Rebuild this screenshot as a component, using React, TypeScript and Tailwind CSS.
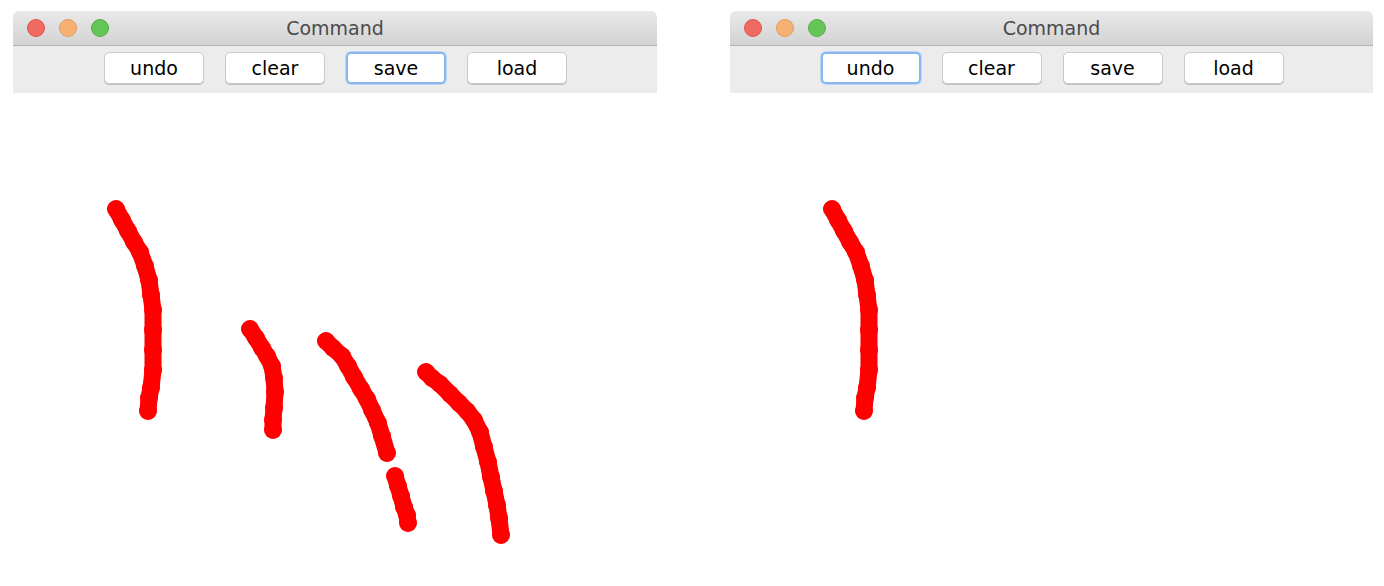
import React from "react";

type Pt = [number, number];

// strokes in page coordinates of the left window
const leftStrokes: Pt[][] = [
  [[116, 209], [122, 220], [128, 231], [134, 242], [140, 252], [145, 266], [149, 280], [151, 295], [153, 310], [153, 330], [153, 350], [153, 370], [151, 388], [149, 398], [148, 411]],
  [[250, 329], [256, 338], [262, 348], [267, 356], [272, 366], [274, 378], [275, 392], [274, 408], [273, 420], [273, 430]],
  [[326, 341], [333, 348], [342, 356], [348, 366], [354, 377], [361, 389], [367, 399], [372, 410], [378, 423], [382, 436], [387, 453]],
  [[395, 476], [398, 486], [401, 496], [404, 507], [407, 515], [408, 523]],
  [[426, 372], [432, 378], [440, 384], [450, 394], [459, 403], [467, 411], [474, 420], [480, 432], [484, 447], [488, 462], [491, 477], [494, 491], [497, 505], [499, 518], [501, 535]],
];

const rightStrokes: Pt[][] = [leftStrokes[0].map(([x, y]) => [x + 716, y] as Pt)];

function Lights() {
  return (
    <div className="absolute left-[14px] top-[8px] flex gap-[14px]">
      <div className="h-[18px] w-[18px] rounded-full bg-[#ef6a60] border border-[#e0554d]" />
      <div className="h-[18px] w-[18px] rounded-full bg-[#f5b072] border border-[#e49c5c]" />
      <div className="h-[18px] w-[18px] rounded-full bg-[#64c656] border border-[#52b045]" />
    </div>
  );
}

function Btn({ label, focused }: { label: string; focused?: boolean }) {
  return (
    <button
      className={
        "h-[32px] w-[100px] rounded-[5px] bg-white text-[19px] leading-none text-black " +
        (focused
          ? "border-2 border-[#8ab8ee] shadow-[0_0_0_1px_#bcd6f5]"
          : "border border-[#cacaca] shadow-[0_1px_0_#c0c0c0]")
      }
    >
      {label}
    </button>
  );
}

function Window({
  width,
  focused,
  strokes,
  originX,
}: {
  width: number;
  focused: string;
  strokes: Pt[][];
  originX: number;
}) {
  return (
    <div className="flex flex-col" style={{ width }}>
      <div className="relative h-[35px] rounded-t-[6px] border-b border-[#b2b2b2] bg-gradient-to-b from-[#e9e9e9] to-[#d3d3d3]">
        <Lights />
        <div className="flex h-full items-center justify-center pt-[1px] text-[19px] text-[#4b4b4b]">Command</div>
      </div>
      <div className="flex h-[47px] items-center justify-center gap-[21px] bg-[#ececec] pb-[3px] pl-[1px]">
        {["undo", "clear", "save", "load"].map((l) => (
          <Btn key={l} label={l} focused={l === focused} />
        ))}
      </div>
      <div className="relative h-[493px] bg-white">
        <svg
          className="absolute inset-0"
          width={width}
          height={493}
          viewBox={`${originX} 93 ${width} 493`}
        >
          {strokes.map((s, i) => (
            <g key={i} fill="#ff0000">
              <polyline
                points={s.map((p) => p.join(",")).join(" ")}
                fill="none"
                stroke="#ff0000"
                strokeWidth={17}
                strokeLinecap="round"
                strokeLinejoin="round"
              />
              {s.map(([x, y], j) => (
                <circle key={j} cx={x} cy={y} r={9} />
              ))}
            </g>
          ))}
        </svg>
      </div>
    </div>
  );
}

export default function App() {
  return (
    <div
      className="flex h-[586px] w-[1384px] overflow-hidden bg-white pt-[11px]"
      style={{ fontFamily: '"DejaVu Sans", "Liberation Sans", sans-serif' }}
    >
      <div className="ml-[13px] flex gap-[73px]">
        <Window width={644} focused="save" strokes={leftStrokes} originX={13} />
        <Window width={643} focused="undo" strokes={rightStrokes} originX={730} />
      </div>
    </div>
  );
}
